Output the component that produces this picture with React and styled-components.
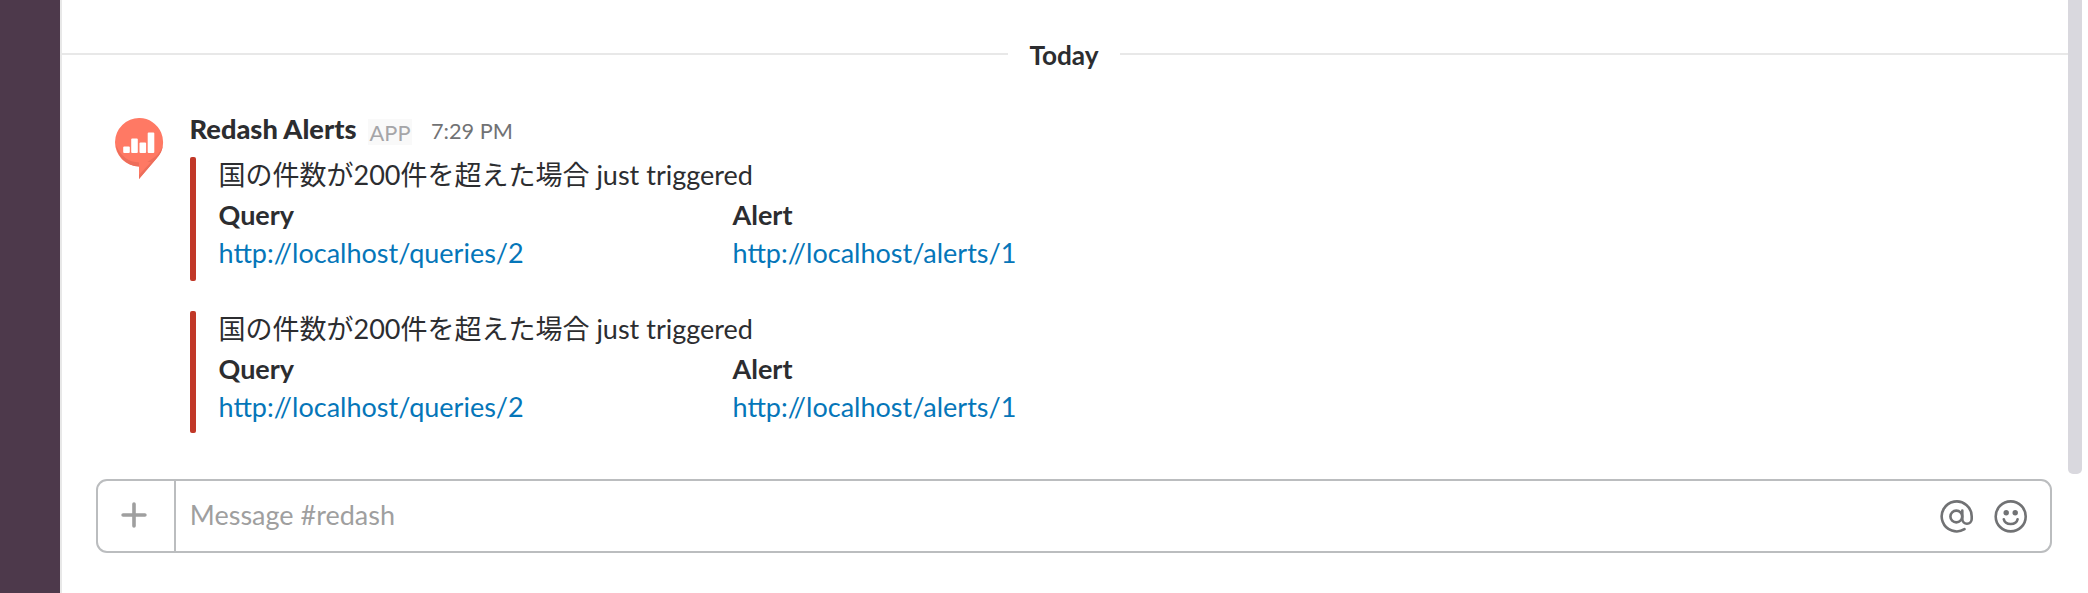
import React from "react";
import styled, { createGlobalStyle } from "styled-components";

const GlobalStyle = createGlobalStyle`
  * { box-sizing: border-box; }
  body {
    margin: 0;
    background: #fff;
    color: #2c2d30;
    font-family: Lato, "Noto Sans CJK JP", sans-serif;
    font-size: 27px;
  }
`;

const Page = styled.div`
  display: flex;
  height: 593px;
  overflow: hidden;
`;

const Sidebar = styled.aside`
  flex: 0 0 62px;
  background: #4d394b;
  border-right: 2px solid #e8e8e8;
`;

const Channel = styled.main`
  flex: 1;
  min-width: 0;
  display: flex;
  flex-direction: column;
`;

const History = styled.section`
  display: flex;
  height: 479px;
`;

const Messages = styled.div`
  flex: 1;
  padding-top: 36px;
`;

const ScrollTrack = styled.div`
  flex: 0 0 20px;
  padding-right: 6px;
`;

const ScrollThumb = styled.div`
  height: 474px;
  background: #d9d8de;
  border-radius: 0 0 5px 5px;
`;

const DayDivider = styled.div`
  display: grid;
  grid-template-columns: 946px 112px 1fr;
  align-items: center;
  height: 36px;
`;

const Rule = styled.span`
  height: 2px;
  background: #e8e8e8;
`;

const DayLabel = styled.span`
  padding-top: 2px;
  text-align: center;
  font-size: 26.2px;
  font-weight: 700;
  line-height: 34px;
`;

const Message = styled.article`
  display: flex;
  margin-top: 41px;
  padding-left: 53px;
`;

const Avatar = styled.svg`
  flex: none;
  width: 49px;
  height: 62px;
  margin: 5px 26px 0 0;
`;

const MessageHeader = styled.header`
  display: flex;
  align-items: flex-start;
  height: 44px;
`;

const Author = styled.span`
  width: 178px;
  margin-left: -0.4px;
  margin-right: 0.4px;
  font-size: 27.2px;
  font-weight: 900;
  line-height: 32px;
  white-space: nowrap;
`;

const AppBadge = styled.span`
  width: 44px;
  height: 26px;
  margin-top: 6px;
  background: #f9f9f9;
  color: #a5a5a8;
  font-size: 21.8px;
  line-height: 28px;
  text-align: center;
`;

const Time = styled.time`
  margin: 2px 0 0 19px;
  color: #717274;
  font-size: 21.7px;
  line-height: 32px;
`;

const Attachment = styled.div`
  display: flex;
  height: ${(p) => p.$height}px;
  margin-bottom: 30px;
`;

const AttachmentBar = styled.span`
  flex: 0 0 6px;
  margin-right: 22.5px;
  border-radius: 2px;
  background: #c13828;
`;

const AttachmentText = styled.p`
  margin: 0 0 4px;
  line-height: 35px;
`;

const Fields = styled.div`
  display: grid;
  grid-template-columns: 514px auto;
`;

const Field = styled.div`
  display: flex;
  flex-direction: column;
  line-height: 38px;
`;

const FieldTitle = styled.span`
  font-weight: 700;
`;

const Link = styled.a`
  color: #0576b9;
  text-decoration: none;
`;

const Composer = styled.form`
  display: flex;
  height: 74px;
  margin: 0 36px 0 34px;
  border: 2px solid #bbbdbf;
  border-radius: 11px;
`;

const AddButton = styled.button`
  display: flex;
  align-items: center;
  justify-content: center;
  width: 78px;
  padding: 0 4px 2px 0;
  border: 0;
  border-right: 2px solid #bbbdbf;
  background: none;
`;

const Placeholder = styled.div`
  flex: 1;
  padding-left: 13.8px;
  color: #9f9f9f;
  line-height: 67px;
`;

const ComposerIcons = styled.div`
  display: flex;
  align-items: center;
  gap: 20px;
  margin-right: 22px;
`;

const Icon = styled.svg`
  flex: none;
  width: ${(p) => p.$size}px;
  height: ${(p) => p.$size}px;
  fill: none;
  stroke: ${(p) => p.$color};
  stroke-width: ${(p) => p.$weight};
  stroke-linecap: round;
`;

function RedashAvatar() {
  return (
    <Avatar viewBox="0 0 49 62">
      <path d="M24.5 0A24 24 0 0 0 24 48.5V61L41.5 40.5A24 24 0 0 0 24.5 0Z" fill="#ff7964" />
      <path d="M1 27A23.8 23.8 0 0 0 24 48.5V61L41.5 40.5Q47.5 34 48 27Q46 34 40.5 38.5L28 47L24 44.5Q8 44 1 27Z" fill="#ed6e5b" />
      <path d="M24 44H36L24 57Z" fill="#ff7964" />
      <g fill="#fff">
        <rect x="8.2" y="28.5" width="6.6" height="6.5" rx="1" />
        <rect x="16.2" y="20.5" width="6.6" height="14.5" rx="1" />
        <rect x="24.5" y="24.5" width="6.6" height="10.5" rx="1" />
        <rect x="32.7" y="14.5" width="6.6" height="20.5" rx="1" />
      </g>
    </Avatar>
  );
}

function AlertAttachment({ height }) {
  return (
    <Attachment $height={height}>
      <AttachmentBar />
      <div>
        <AttachmentText>国の件数が200件を超えた場合 just triggered</AttachmentText>
        <Fields>
          <Field>
            <FieldTitle>Query</FieldTitle>
            <Link href="http://localhost/queries/2">http://localhost/queries/2</Link>
          </Field>
          <Field>
            <FieldTitle>Alert</FieldTitle>
            <Link href="http://localhost/alerts/1">http://localhost/alerts/1</Link>
          </Field>
        </Fields>
      </div>
    </Attachment>
  );
}

export default function App() {
  return (
    <Page>
      <GlobalStyle />
      <Sidebar />
      <Channel>
        <History>
          <Messages>
            <DayDivider>
              <Rule />
              <DayLabel>Today</DayLabel>
              <Rule />
            </DayDivider>
            <Message>
              <RedashAvatar />
              <div>
                <MessageHeader>
                  <Author>Redash Alerts</Author>
                  <AppBadge>APP</AppBadge>
                  <Time>7:29 PM</Time>
                </MessageHeader>
                <AlertAttachment height={124} />
                <AlertAttachment height={122} />
              </div>
            </Message>
          </Messages>
          <ScrollTrack>
            <ScrollThumb />
          </ScrollTrack>
        </History>
        <Composer>
          <AddButton type="button" aria-label="Add">
            <Icon viewBox="0 0 26 26" $size={26} $color="#9f9f9f" $weight={3.6}>
              <path d="M13 2.1V23.9M2.1 13H23.9" />
            </Icon>
          </AddButton>
          <Placeholder>Message #redash</Placeholder>
          <ComposerIcons>
            <Icon viewBox="0 0 34 34" $size={34} $color="#717274" $weight={2.6}>
              <circle cx="16.3" cy="17.5" r="5.9" />
              <path d="M22.3 11.5V20A4.7 4.7 0 0 0 31.7 20V17.5A15 15 0 1 0 24.5 30.2" />
            </Icon>
            <Icon viewBox="0 0 34 34" $size={34} $color="#717274" $weight={2.6}>
              <circle cx="16.7" cy="17.4" r="15" />
              <circle cx="12.2" cy="13.8" r="2.7" fill="#717274" stroke="none" />
              <circle cx="21.2" cy="13.8" r="2.7" fill="#717274" stroke="none" />
              <path d="M9.8 20.2C11.2 26.6 22.2 26.6 23.6 20.2" />
            </Icon>
          </ComposerIcons>
        </Composer>
      </Channel>
    </Page>
  );
}
